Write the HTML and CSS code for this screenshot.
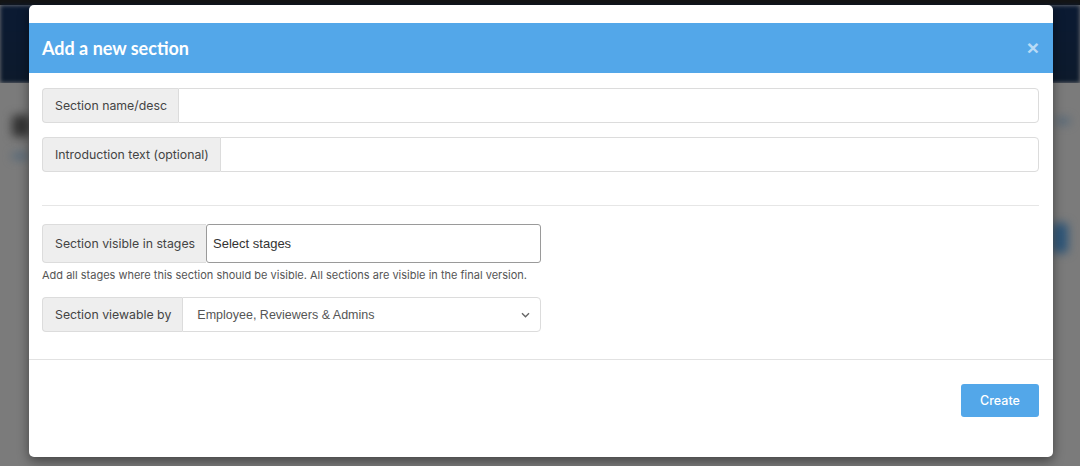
FILE: index.html
```html
<!DOCTYPE html>
<html lang="en">
<head>
<meta charset="utf-8">
<title>Add a new section</title>
<link rel="stylesheet" href="styles.css">
</head>
<body>
<div class="backdrop">
  <div class="bd-top"></div>
  <div class="bd-nav"></div>
  <div class="bd-content">
    <div class="blob b1"></div>
    <div class="blob b2"></div>
    <div class="blob b3"></div>
    <div class="blob b4"></div>
  </div>
</div>

<div class="modal">
  <div class="modal-header">
    <h4 class="modal-title">Add a new section</h4>
    <span class="close">&times;</span>
  </div>
  <div class="modal-body">
    <div class="input-group">
      <span class="addon">Section name/desc</span>
      <span class="field"></span>
    </div>
    <div class="input-group">
      <span class="addon">Introduction text (optional)</span>
      <span class="field"></span>
    </div>
    <hr class="divider">
    <div class="input-group narrow tall">
      <span class="addon">Section visible in stages</span>
      <span class="field multi">Select stages</span>
    </div>
    <p class="help">Add all stages where this section should be visible. All sections are visible in the final version.</p>
    <div class="input-group narrow">
      <span class="addon">Section viewable by</span>
      <span class="field select">Employee, Reviewers &amp; Admins
        <svg class="chev" width="9" height="6" viewBox="0 0 9 6"><path d="M1 1.2 L4.5 4.7 L8 1.2" fill="none" stroke="#666" stroke-width="1.4"/></svg>
      </span>
    </div>
  </div>
  <div class="modal-footer">
    <button class="btn">Create</button>
  </div>
</div>
</body>
</html>
```

FILE: styles.css
```css
html, body {
  margin: 0;
  padding: 0;
  height: 100%;
  overflow: hidden;
}
body {
  font-family: "Inter", "Lato", sans-serif;
  color: #444;
  background: #7c7c7c;
}
.backdrop {
  display: flex;
  flex-direction: column;
  height: 466px;
}
.bd-top {
  height: 5px;
  background: #141515;
}
.bd-nav {
  height: 78px;
  background: linear-gradient(#0b1a33, #0d1a2c);
  filter: blur(2px);
}
.bd-content {
  flex: 1;
  position: relative;
  background: #7b7b7b;
}
.blob {
  position: absolute;
  filter: blur(5px);
  border-radius: 4px;
}
.b1 { left: 12px; top: 32px; width: 18px; height: 22px; background: #333; }
.b2 { left: 12px; top: 70px; width: 16px; height: 6px; background: #4d6478; }
.b3 { left: 1052px; top: 140px; width: 16px; height: 30px; background: #2d5578; }
.b4 { left: 1056px; top: 35px; width: 14px; height: 6px; background: #4d6478; }
.modal {
  position: absolute;
  left: 29px;
  top: 5px;
  width: 1024px;
  height: 452px;
  background: #fff;
  border-radius: 5px;
  box-shadow: 0 4px 12px rgba(0,0,0,0.45);
  box-sizing: border-box;
  padding-top: 18px;
  display: flex;
  flex-direction: column;
}
.modal-header {
  height: 50px;
  background: #53a7e9;
  display: flex;
  align-items: center;
  justify-content: space-between;
  padding: 0 14px 0 13px;
}
.modal-title {
  margin: 0;
  color: #fff;
  font-family: "Lato", sans-serif;
  font-size: 18px;
  font-weight: 700;
  letter-spacing: 0;
}
.close {
  color: rgba(255,255,255,0.6);
  font-family: "Liberation Sans", sans-serif;
  font-size: 21px;
  font-weight: 700;
  line-height: 1;
  margin-top: -2px;
}
.modal-body {
  padding: 15px 14px 0 13px;
  display: flex;
  flex-direction: column;
  height: 287px;
  box-sizing: border-box;
  border-bottom: 1px solid #e2e2e2;
}
.input-group {
  display: flex;
  height: 35px;
  margin-bottom: 14px;
  font-size: 12.3px;
}
.input-group.narrow {
  width: 499px;
}
.input-group.tall {
  height: 39px;
  margin-bottom: 0;
}
.addon {
  display: flex;
  align-items: center;
  padding: 0 11px 0 12px;
  background: #eeeeee;
  border: 1px solid #dcdcdc;
  border-right: none;
  border-radius: 4px 0 0 4px;
  color: #444;
  white-space: nowrap;
}
.field {
  flex: 1;
  display: flex;
  align-items: center;
  border: 1px solid #dcdcdc;
  border-radius: 0 4px 4px 0;
  background: #fff;
}
.field.multi {
  border: 1px solid #9a9a9a;
  border-radius: 3px;
  align-items: flex-start;
  padding: 11px 0 0 6px;
  font-family: "Liberation Sans", sans-serif;
  font-size: 13px;
  color: #333;
}
.field.select {
  padding: 0 10px 0 14px;
  font-family: "Liberation Sans", sans-serif;
  font-size: 12.5px;
  color: #555;
  justify-content: space-between;
}
.divider {
  border: 0;
  border-top: 1px solid #e6e6e6;
  margin: 19px 0 18px;
}
.help {
  margin: 5px 0 15px;
  font-size: 11px;
  line-height: 14px;
  color: #555;
}
.modal-footer {
  display: flex;
  justify-content: flex-end;
  padding: 24px 14px 0 13px;
}
.btn {
  width: 78px;
  height: 33px;
  border: none;
  border-radius: 3px;
  background: #53a7e9;
  color: #fff;
  font-family: "Inter", sans-serif;
  font-size: 12.5px;
  font-weight: 500;
}
```
